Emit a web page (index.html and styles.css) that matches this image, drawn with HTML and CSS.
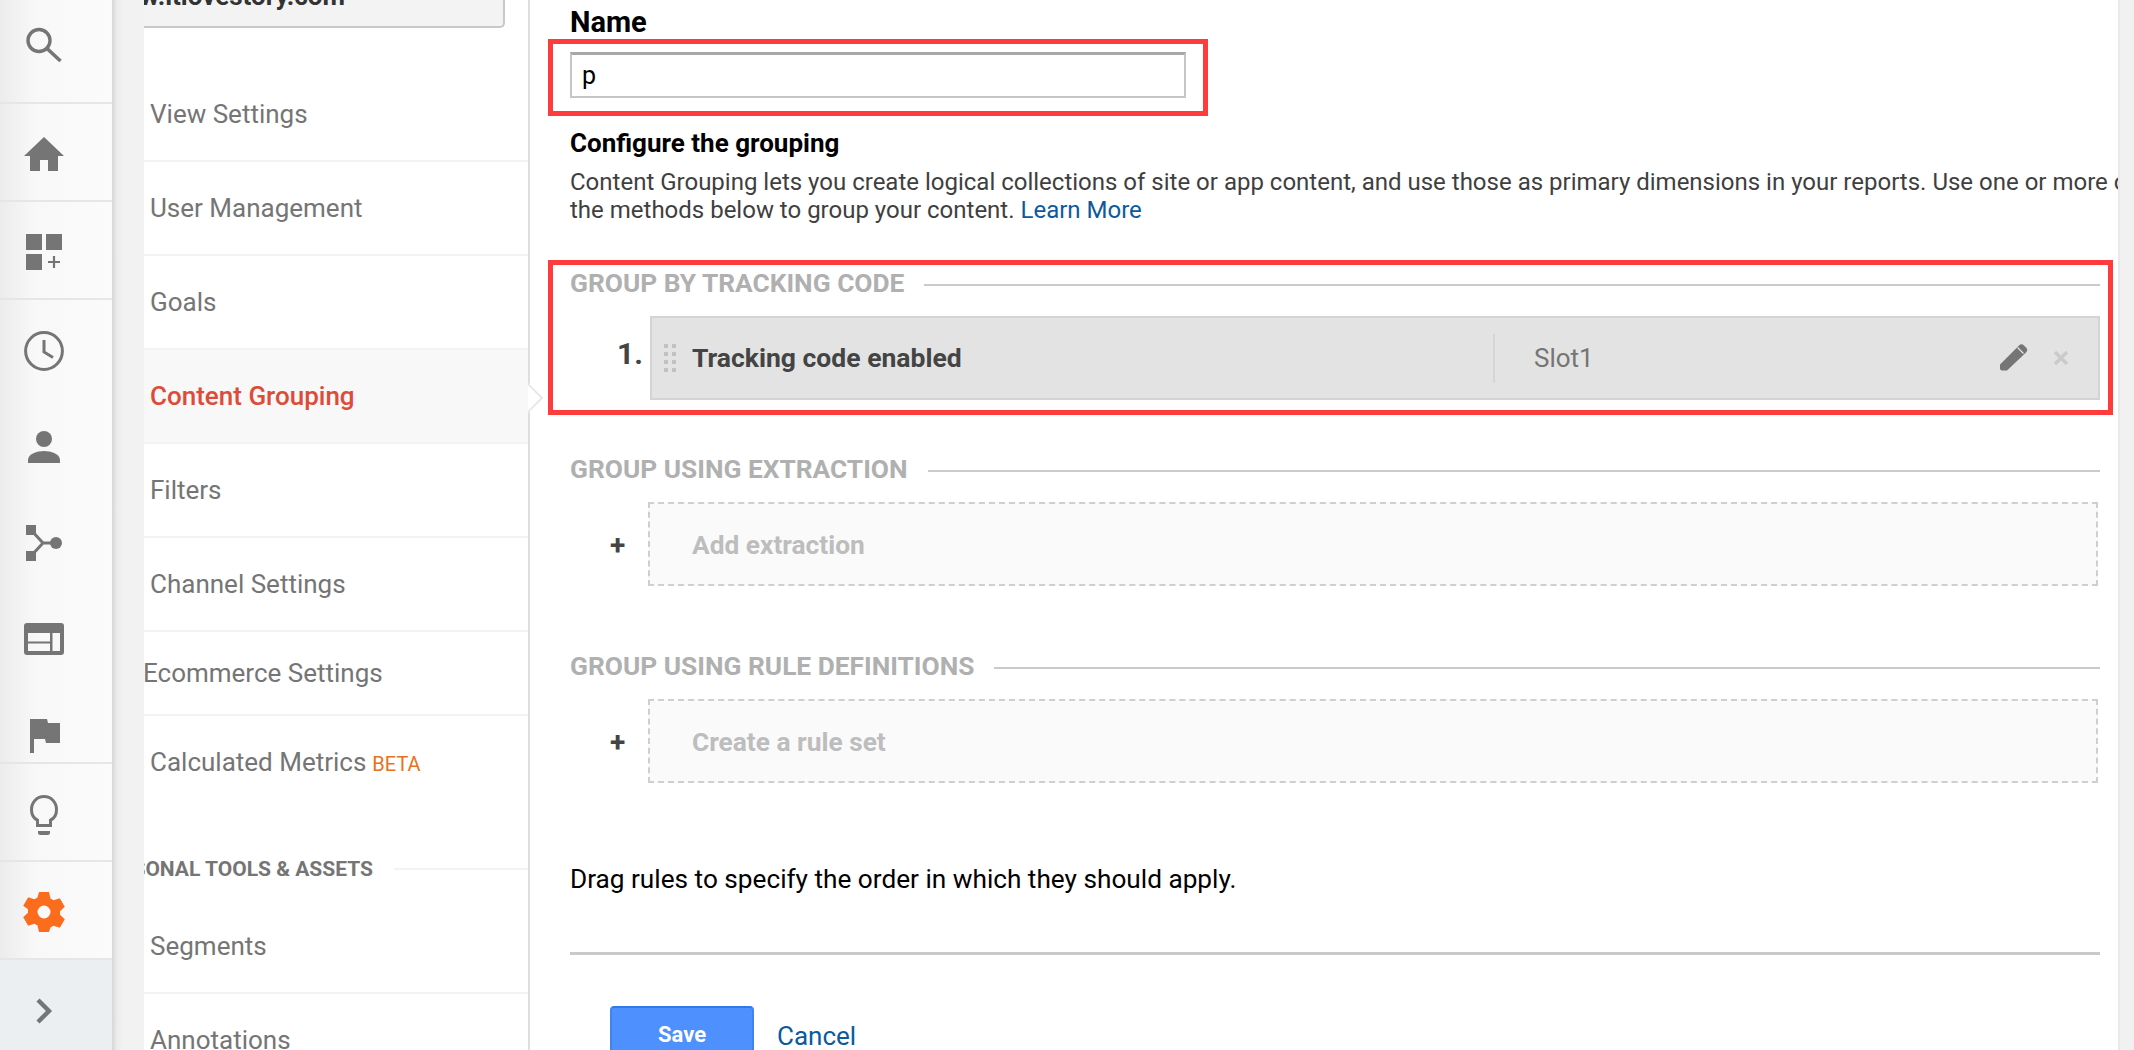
FILE: index.html
```html
<!DOCTYPE html>
<html lang="en">
<head>
<meta charset="utf-8">
<title>Content Grouping</title>
<link rel="stylesheet" href="styles.css">
</head>
<body>
<div class="page">
  <nav class="rail">
    <div class="rail-cell tall-a">
      <svg class="ico" viewBox="0 0 44 44"><circle cx="17" cy="17.500" r="11" fill="none" stroke="#757575" stroke-width="3.400"/><path d="M25 25.500 L38.500 38" stroke="#757575" stroke-width="3.600" fill="none"/></svg>
    </div>
    <div class="rail-cell">
      <svg class="ico" viewBox="0 0 44 44"><path d="M22 5 L42 24 H36 V39 H26 V28 H18 V39 H8 V24 H2 Z" fill="#757575"/></svg>
    </div>
    <div class="rail-cell">
      <svg class="ico" viewBox="0 0 44 44"><path d="M4 4h16v16H4zM24 4h16v16H24zM4 24h16v16H4z" fill="#757575"/><path d="M32 26v12M26 32h12" stroke="#757575" stroke-width="2.200"/></svg>
    </div>
    <div class="rail-group">
      <div class="rail-item">
        <svg class="ico" viewBox="0 0 44 44"><circle cx="22" cy="22" r="18.400" fill="none" stroke="#757575" stroke-width="3"/><path d="M22 11v12l9 5.500" fill="none" stroke="#757575" stroke-width="3"/></svg>
      </div>
      <div class="rail-item">
        <svg class="ico" viewBox="0 0 44 44"><circle cx="22" cy="13" r="8" fill="#757575"/><path d="M6 37v-3c0-6 9-9 16-9s16 3 16 9v3z" fill="#757575"/></svg>
      </div>
      <div class="rail-item">
        <svg class="ico" viewBox="0 0 44 44"><path d="M4 3h10v10H4zM4 29h10v10H4z" fill="#757575"/><circle cx="34" cy="21" r="6" fill="#757575"/><path d="M9 8 L21 21 L9 34 M21 21 H32" fill="none" stroke="#757575" stroke-width="3"/></svg>
      </div>
      <div class="rail-item">
        <svg class="ico" viewBox="0 0 44 44"><path fill-rule="evenodd" d="M5 4h34a3 3 0 0 1 3 3v26a3 3 0 0 1-3 3H5a3 3 0 0 1-3-3V7a3 3 0 0 1 3-3zM6 14v8.500h22V14zM6 24.500V32h22v-7.500zM30.500 14v18H38V14z" fill="#757575"/></svg>
      </div>
      <div class="rail-item">
        <svg class="ico" viewBox="0 0 44 44"><path d="M8 4h17l1 4h12v20H24l-1-4H12v14H8z" fill="#757575"/></svg>
      </div>
    </div>
    <div class="rail-cell">
      <svg class="ico" viewBox="0 0 44 44"><path d="M15.500 33.500v-5.300C11 26 9.500 21.500 9.500 17.500 9.500 10 15 4.500 22 4.500S34.500 10 34.500 17.500c0 4-1.500 8.500-6 10.700v5.300z" fill="none" stroke="#757575" stroke-width="3"/><path d="M16 39h12v1.500a2.500 2.500 0 0 1-2.500 2.500h-7a2.500 2.500 0 0 1-2.500-2.500z" fill="#757575"/></svg>
    </div>
    <div class="rail-cell">
      <svg class="ico" viewBox="0 0 44 44"><path fill-rule="evenodd" d="M17 2h10l1.500 6.500 3 1.700 6.300-2 5 8.600-4.800 4.500v3.400l4.800 4.500-5 8.600-6.300-2-3 1.700L27 42H17l-1.500-6.500-3-1.700-6.300 2-5-8.600 4.800-4.500v-3.400L1.200 15.800l5-8.600 6.300 2 3-1.700zM22 15.500a6.500 6.500 0 1 0 0 13 6.500 6.500 0 0 0 0-13z" fill="#fb6d1d"/></svg>
    </div>
    <div class="rail-cell expand">
      <svg class="ico" viewBox="0 0 44 44"><path d="M16 11 L27 22 L16 33" fill="none" stroke="#757575" stroke-width="4.400"/></svg>
    </div>
  </nav>

  <div class="gutter"></div>

  <aside class="panel">
    <div class="view-select"><span class="view-name">www.itlovestory.com</span></div>
    <ul class="menu">
      <li class="menu-item">View Settings</li>
      <li class="menu-item">User Management</li>
      <li class="menu-item">Goals</li>
      <li class="menu-item active">Content Grouping</li>
      <li class="menu-item">Filters</li>
      <li class="menu-item">Channel Settings</li>
      <li class="menu-item short"><span class="shifted">Ecommerce Settings</span></li>
      <li class="menu-item calc">Calculated Metrics <span class="beta">BETA</span></li>
    </ul>
    <div class="menu-head"><span class="menu-head-text">PERSONAL TOOLS &amp; ASSETS</span><span class="menu-head-line"></span></div>
    <ul class="menu">
      <li class="menu-item">Segments</li>
      <li class="menu-item">Annotations</li>
    </ul>
  </aside>

  <main class="main">
    <h2 class="name-label">Name</h2>
    <div class="mark mark-name">
      <div class="text-input">p</div>
    </div>
    <h3 class="config-title">Configure the grouping</h3>
    <p class="config-text">Content Grouping lets you create logical collections of site or app content, and use those as primary dimensions in your reports. Use one or more of<br>the methods below to group your content. <a class="link" href="#">Learn More</a></p>

    <div class="mark mark-group">
      <div class="group-head"><span>GROUP BY TRACKING CODE</span><i class="rule"></i></div>
      <div class="slot-row">
        <span class="num">1.</span>
        <div class="slot">
          <span class="grip"></span>
          <span class="slot-title">Tracking code enabled</span>
          <span class="slot-sep"></span>
          <span class="slot-name">Slot1</span>
          <svg class="pencil" viewBox="0 0 28 28"><path d="M0 21.500 L19 2.500 a3.500 3.500 0 0 1 5 0 l2 2 a3.500 3.500 0 0 1 0 5 L7 27.500 H2 a2 2 0 0 1-2-2z" fill="#757575"/><path d="M17.500 4.500 L23.500 10.500" stroke="#e3e3e3" stroke-width="1.300"/></svg>
          <svg class="close" viewBox="0 0 16 16"><path d="M2 2 L14 14 M14 2 L2 14" stroke="#cacaca" stroke-width="3.400"/></svg>
        </div>
      </div>
    </div>

    <section class="group">
      <div class="group-head"><span>GROUP USING EXTRACTION</span><i class="rule"></i></div>
      <div class="add-row"><span class="plus">+</span><div class="add-box">Add extraction</div></div>
    </section>

    <section class="group">
      <div class="group-head"><span>GROUP USING RULE DEFINITIONS</span><i class="rule"></i></div>
      <div class="add-row"><span class="plus">+</span><div class="add-box">Create a rule set</div></div>
    </section>

    <p class="drag-note">Drag rules to specify the order in which they should apply.</p>
    <hr class="divider">
    <div class="actions">
      <button class="save" type="button">Save</button>
      <a class="link cancel" href="#">Cancel</a>
    </div>
  </main>

  <div class="scrollbar"></div>
</div>
</body>
</html>
```
FILE: styles.css
```css
* { box-sizing: border-box; }
html, body { margin: 0; height: 100%; overflow: hidden; background: #fff; }
body { font-family: Roboto, "Liberation Sans", sans-serif; color: #000; }
.page { display: flex; width: 2134px; height: 1050px; overflow: hidden; }

/* icon rail */
.rail { width: 112px; flex: none; display: flex; flex-direction: column; background: linear-gradient(90deg, #ececec 0, #f8f8f8 35px, #fbfbfb 100%); }
.rail-cell { height: 98px; flex: none; display: flex; align-items: center; justify-content: center; padding: 4px 24px 0 0; border-bottom: 2px solid #e6e6e6; }
.rail-cell.tall-a { height: 104px; padding-top: 0; padding-bottom: 12px; }
.rail-group { height: 464px; flex: none; border-bottom: 2px solid #e6e6e6; padding-top: 3px; display: flex; flex-direction: column; }
.rail-item { height: 96.5px; flex: none; display: flex; align-items: center; justify-content: center; padding-right: 24px; }
.rail-cell.expand { flex: 1; border-bottom: 0; padding-top: 12px; background: #ebeff2; }
.ico { width: 44px; height: 44px; display: block; flex: none; }

.gutter { width: 32px; flex: none; background: linear-gradient(90deg, #d6d6d6 0, #ececec 5px, #f2f2f2 12px); }

/* menu panel */
.panel { width: 386px; flex: none; border-right: 2px solid #dedede; display: flex; flex-direction: column; position: relative; }
.view-select { height: 28px; width: 361px; flex: none; display: flex; justify-content: flex-end; align-items: flex-start; padding-right: 158px; background: #f3f3f3; border: 2px solid #c9c9c9; border-top: 0; border-left: 0; border-bottom-right-radius: 5px; overflow: hidden; margin-bottom: 40px; }
.view-name { flex: none; font-size: 26px; font-weight: 700; color: #333; line-height: 30px; margin-top: -19px; white-space: nowrap; }
.menu { list-style: none; margin: 0; padding: 0; flex: none; }
.menu-item { height: 94px; border-bottom: 2px solid #f3f3f3; padding-left: 6px; display: flex; align-items: center; gap: 6px; font-size: 26px; color: #757575; white-space: nowrap; position: relative; }
.menu-item.active { background: #f8f8f8; color: #dd4b39; font-weight: 500; }
.menu-item.active::after { content: ""; position: absolute; right: -11px; top: 37px; width: 20px; height: 20px; background: #fff; border-top: 2px solid #e6e6e6; border-right: 2px solid #e6e6e6; transform: rotate(45deg); clip-path: polygon(0 0, 100% 0, 100% 100%); }
.menu-item.short { height: 84px; padding-left: 0; }
.shifted { margin-left: -1px; }
.menu-item.calc { height: 92px; border-bottom: 0; }
.beta { font-size: 20px; color: #e8711d; margin-top: 4px; }
.menu-head { height: 92px; flex: none; display: flex; align-items: center; justify-content: flex-end; gap: 21px; overflow: hidden; white-space: nowrap; padding-top: 30px; }
.menu-head-text { font-size: 21px; font-weight: 700; color: #757575; flex: none; }
.menu-head-line { width: 134px; height: 2px; background: #f3f3f3; flex: none; }

/* main */
.main { flex: 1; min-width: 0; overflow: hidden; padding-left: 40px; padding-right: 18px; }
.name-label { margin: 5px 0 0; font-size: 29px; line-height: 34px; font-weight: 700; }
.mark { border: 5px solid #ff3c3c; margin-left: -22px; padding-left: 17px; }
.mark-name { width: 660px; height: 77px; padding-top: 8px; }
.text-input { width: 616px; height: 46px; border: 2px solid #c6c6c6; border-top: 3px solid #a8a8a8; padding-left: 10px; font-size: 25px; line-height: 41px; background: #fff; }
.config-title { margin: 10px 0 0; font-size: 26px; line-height: 34px; font-weight: 700; }
.config-text { margin: 8px 0 0; font-size: 24px; line-height: 28px; color: #3f3f3f; white-space: nowrap; height: 56px; }
.link { color: #0b5a9e; text-decoration: none; }
.mark-group { margin-top: 36px; width: 1565px; height: 155px; padding-right: 8px; }
.group-head { display: flex; align-items: center; gap: 20px; height: 36px; font-size: 26.300px; font-weight: 700; color: #b0b0b0; white-space: nowrap; }
.rule { flex: 1; height: 2px; background: #cacaca; margin-top: 4px; }
.slot-row { display: flex; margin-top: 15px; }
.num { width: 80px; padding-left: 47px; font-size: 30px; font-weight: 700; color: #444; line-height: 75px; flex: none; white-space: nowrap; }
.slot { flex: 1; height: 84px; background: #e3e3e3; border: 2px solid #d4d4d4; display: flex; align-items: center; padding-left: 12px; }
.grip { width: 12px; height: 28px; margin-right: 16px; flex: none; background-image: linear-gradient(90deg, transparent 4px, #e3e3e3 4px, #e3e3e3 8px, transparent 8px), repeating-linear-gradient(#c2c2c2 0 4px, transparent 4px 8px); }
.slot-title { width: 801px; margin-top: -2px; font-size: 26.500px; font-weight: 700; color: #444; flex: none; }
.slot-sep { width: 2px; height: 49px; background: #d6d6d6; flex: none; }
.slot-name { margin-left: 39px; font-size: 26px; color: #757575; flex: 1; }
.pencil { width: 28px; height: 28px; flex: none; margin: -3px 25px 0 0; }
.close { width: 16px; height: 16px; flex: none; margin-right: 29px; }
.group { margin-top: 36px; }
.group + .group { margin-top: 62px; }
.add-row { display: flex; align-items: center; margin-top: 15px; margin-right: 2px; }
.plus { width: 78px; padding: 2px 0 0 40px; font-size: 28px; font-weight: 700; color: #444; flex: none; }
.add-box { flex: 1; height: 84px; background: #fafafa; border: 2px dashed #cfcfcf; padding: 2px 0 0 42px; display: flex; align-items: center; font-size: 26.300px; font-weight: 700; color: #bdbdbd; }
.drag-note { margin: 80px 0 0; font-size: 26.200px; line-height: 32px; color: #000; white-space: nowrap; }
.divider { margin: 57px 0 0; border: 0; height: 3px; background: #cacaca; }
.actions { display: flex; align-items: flex-start; margin-top: 51px; padding-left: 40px; }
.save { width: 144px; height: 60px; background: #4d90fe; border: 0; border-top: 2px solid #3079ed; border-left: 2px solid #3f84f0; border-right: 2px solid #3f84f0; border-radius: 4px; color: #fff; font: 700 22px Roboto, "Liberation Sans", sans-serif; padding: 0 0 6px; }
.cancel { margin-left: 23px; font-size: 26px; line-height: 60px; }
.scrollbar { width: 16px; flex: none; background: #f1f1f1; border-left: 2px solid #e9e9e9; }
```
